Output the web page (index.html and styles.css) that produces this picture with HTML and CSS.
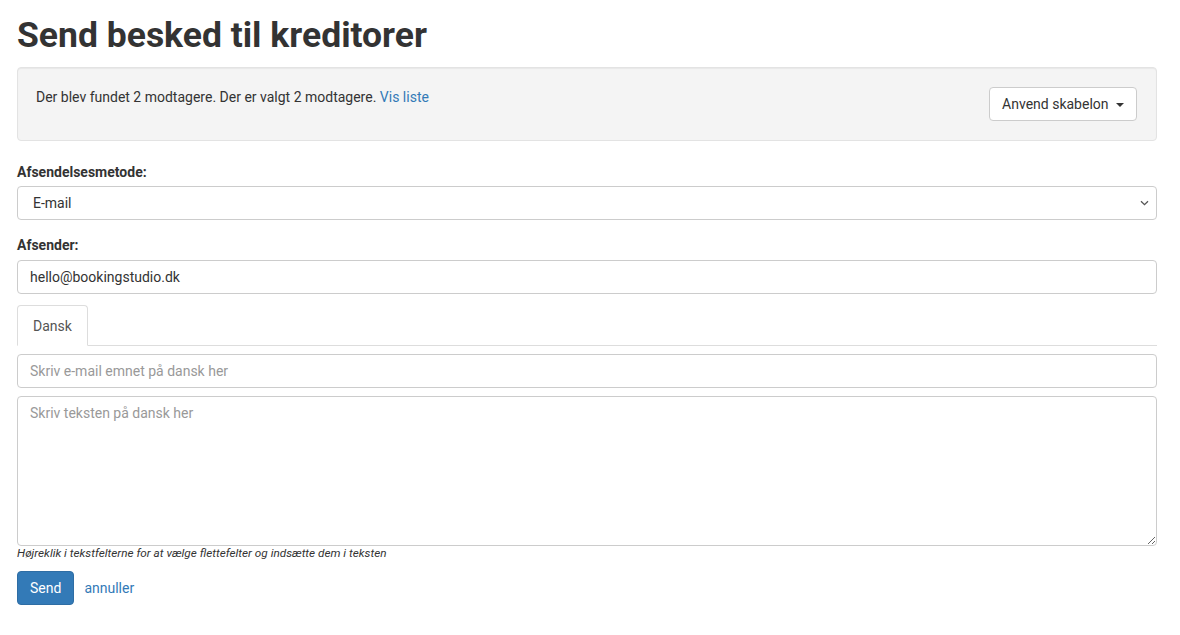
FILE: index.html
```html
<!doctype html>
<html lang="da">
<head>
  <meta charset="utf-8" />
  <meta name="viewport" content="width=device-width,initial-scale=1" />
  <title>Send besked til kreditorer</title>
  <link rel="stylesheet" href="styles.css">
</head>
<body>
  <div class="page">
    <h1>Send besked til kreditorer</h1>

    <!-- Recipients summary -->
    <div class="well">
      <div class="well-text">Der blev fundet 2 modtagere. Der er valgt 2 modtagere. <a href="#">Vis liste</a></div>
      <button class="btn-default" type="button">Anvend skabelon <span class="caret"></span></button>
    </div>

    <form class="message-form">
      <label for="method">Afsendelsesmetode:</label>
      <div class="select-wrap">
        <select id="method">
          <option>E-mail</option>
          <option>SMS</option>
        </select>
        <svg class="select-arrow" width="9" height="6" viewBox="0 0 9 6"><path d="M1 1.2 4.5 4.6 8 1.2" fill="none" stroke="#555" stroke-width="1.3"/></svg>
      </div>

      <label for="sender" class="spaced">Afsender:</label>
      <input type="text" id="sender" value="hello@bookingstudio.dk">

      <ul class="nav-tabs">
        <li class="active"><a href="#">Dansk</a></li>
      </ul>

      <input type="text" class="subject" placeholder="Skriv e-mail emnet på dansk her">
      <textarea class="body-text" placeholder="Skriv teksten på dansk her"></textarea>
      <div class="hint">Højreklik i tekstfelterne for at vælge flettefelter og indsætte dem i teksten</div>

      <div class="actions">
        <button type="submit" class="btn-primary">Send</button>
        <a href="#">annuller</a>
      </div>
    </form>
  </div>
</body>
</html>
```

FILE: styles.css
```css
:root {
  --text: #333;
  --link: #337ab7;
  --border: #ccc;
  font-family: Roboto, "Liberation Sans", sans-serif;
}
html, body { margin:0; padding:0; background:#fff; color:var(--text); }
* { box-sizing:border-box; }
.page { max-width:1140px; margin-left:17px; font-size:14px; line-height:20px; }
a { color:var(--link); text-decoration:none; }

h1 { font-size:35.5px; line-height:39px; font-weight:700; margin:16px 0 12px; }

/* Well */
.well {
  display:flex; justify-content:space-between; align-items:flex-start;
  background:#f4f4f4; border:1px solid #e3e3e3; border-radius:4px;
  padding:19px 19px 19px 18px; margin-bottom:21px;
  box-shadow:inset 0 1px 1px rgba(0,0,0,0.05);
}
.btn-default {
  font:inherit; color:var(--text); background:#fff;
  border:1px solid #ccc; border-radius:4px;
  height:34px; padding:6px 12px; cursor:pointer;
}
.caret {
  display:inline-block; width:0; height:0; margin-left:4px; vertical-align:middle;
  border-top:4px solid; border-left:4px solid transparent; border-right:4px solid transparent;
}

/* Form */
label { display:block; font-weight:700; font-size:14px; line-height:20px; margin-bottom:4px; }
label.spaced { margin-top:15px; margin-bottom:5px; }
input, select, textarea {
  display:block; width:100%; font:inherit; font-size:14px; color:#333;
  border:1px solid var(--border); border-radius:4px; background:#fff;
  padding:6px 12px; line-height:20px;
}
input, select { height:34px; }
input::placeholder, textarea::placeholder { color:#999; }
.select-wrap { position:relative; }
select { -webkit-appearance:none; appearance:none; padding-left:15px; }
.select-arrow { position:absolute; right:8px; top:14px; pointer-events:none; }

.nav-tabs {
  list-style:none; margin:11px 0 0; padding:0; display:flex;
  border-bottom:1px solid #ddd;
}
.nav-tabs li { margin-bottom:-1px; }
.nav-tabs a {
  display:block; padding:10px 15px 9px; line-height:20px; color:#555;
  border:1px solid #ddd; border-bottom-color:transparent;
  border-radius:4px 4px 0 0; background:#fff;
}
.subject { margin-top:8px; }
.body-text { margin-top:8px; height:150px; resize:vertical; }
.hint { font-size:11.75px; font-style:italic; line-height:14px; }

.actions { display:flex; align-items:center; gap:10px; margin-top:11px; }
.btn-primary {
  font:inherit; color:#fff; background:var(--link);
  border:1px solid #2e6da4; border-radius:4px;
  height:34px; padding:6px 12px; cursor:pointer;
}
```
